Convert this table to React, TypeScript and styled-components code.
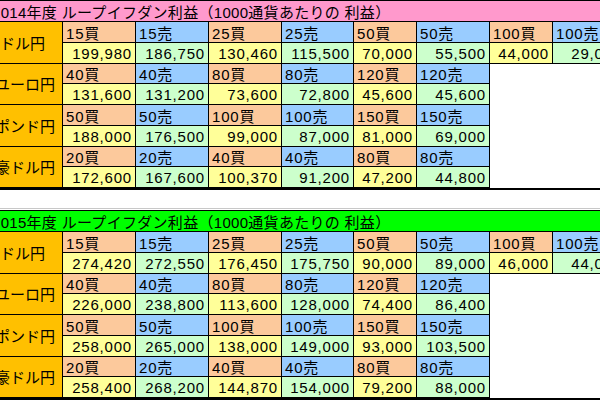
import React from "react";
import styled, { createGlobalStyle } from "styled-components";

const Global = createGlobalStyle`
  html, body { margin: 0; padding: 0; background: #fff; overflow: hidden; }
  body { font-family: "Liberation Sans", "Noto Sans CJK JP", sans-serif; }
`;

const Page = styled.div`
  width: 600px;
  height: 400px;
  overflow: hidden;
`;

const Sheet = styled.div`
  margin-left: -12px;
  width: 638px;
  display: grid;
  grid-template-columns: 75px 73px 73px 73px 72px 63px 73px 63px 73px;
  grid-template-rows: 21px;
  grid-auto-rows: 20.75px;
  border-top: 1px solid #000;
  border-bottom: 2px solid #000;
  font-size: 15px;
  color: #000;
`;

const Title = styled.div<{ $bg: string }>`
  grid-column: 1 / -1;
  background: ${(p) => p.$bg};
  border-bottom: 1px solid #000;
  box-sizing: border-box;
  display: flex;
  align-items: center;
  padding-left: 4px;
  white-space: nowrap;
  letter-spacing: 0.3px;
`;

const Pair = styled.div<{ $nudge: number }>`
  grid-row: span 2;
  background: #ffc000;
  border-right: 1px solid #000;
  border-bottom: 1px solid #000;
  box-sizing: border-box;
  display: flex;
  align-items: center;
  justify-content: center;
  padding-right: ${(p) => p.$nudge}px;
  white-space: nowrap;
  overflow: hidden;
`;

const Cell = styled.div<{ $bg: string; $right?: boolean }>`
  background: ${(p) => p.$bg};
  border-right: 1px solid #000;
  border-bottom: 1px solid #000;
  box-sizing: border-box;
  display: flex;
  align-items: center;
  justify-content: ${(p) => (p.$right ? "flex-end" : "flex-start")};
  padding: ${(p) => (p.$right ? "1px 3px 0 0" : "1px 0 0 3px")};
  white-space: nowrap;
  overflow: hidden;
  letter-spacing: 0.8px;
`;

const Blank = styled.div`
  background: #fff;
`;

const Divider = styled.div`
  height: 19px;
  box-sizing: border-box;
  border-bottom: 1px solid #c8c8c8;
  margin-bottom: 1px;
`;

type Entry = [string, string];
type Group = { name: string; nudge: number; items: Entry[] };

const BUY_LABEL = "#fcc99c";
const SELL_LABEL = "#99ccff";
const BUY_VAL = "#ffff99";
const SELL_VAL = "#ccffcc";

const y2014: Group[] = [
  {
    name: "米ドル円",
    nudge: 20,
    items: [
      ["15買", "199,980"], ["15売", "186,750"], ["25買", "130,460"], ["25売", "115,500"],
      ["50買", "70,000"], ["50売", "55,500"], ["100買", "44,000"], ["100売", "29,000"],
    ],
  },
  {
    name: "ユーロ円",
    nudge: 0,
    items: [
      ["40買", "131,600"], ["40売", "131,200"], ["80買", "73,600"], ["80売", "72,800"],
      ["120買", "45,600"], ["120売", "45,600"],
    ],
  },
  {
    name: "ポンド円",
    nudge: 0,
    items: [
      ["50買", "188,000"], ["50売", "176,500"], ["100買", "99,000"], ["100売", "87,000"],
      ["150買", "81,000"], ["150売", "69,000"],
    ],
  },
  {
    name: "豪ドル円",
    nudge: 0,
    items: [
      ["20買", "172,600"], ["20売", "167,600"], ["40買", "100,370"], ["40売", "91,200"],
      ["80買", "47,200"], ["80売", "44,800"],
    ],
  },
];

const y2015: Group[] = [
  {
    name: "米ドル円",
    nudge: 20,
    items: [
      ["15買", "274,420"], ["15売", "272,550"], ["25買", "176,450"], ["25売", "175,750"],
      ["50買", "90,000"], ["50売", "89,000"], ["100買", "46,000"], ["100売", "44,000"],
    ],
  },
  {
    name: "ユーロ円",
    nudge: 0,
    items: [
      ["40買", "226,000"], ["40売", "238,800"], ["80買", "113,600"], ["80売", "128,000"],
      ["120買", "74,400"], ["120売", "86,400"],
    ],
  },
  {
    name: "ポンド円",
    nudge: 0,
    items: [
      ["50買", "258,000"], ["50売", "265,000"], ["100買", "138,000"], ["100売", "149,000"],
      ["150買", "93,000"], ["150売", "103,500"],
    ],
  },
  {
    name: "豪ドル円",
    nudge: 0,
    items: [
      ["20買", "258,400"], ["20売", "268,200"], ["40買", "144,870"], ["40売", "154,000"],
      ["80買", "79,200"], ["80売", "88,000"],
    ],
  },
];

const COLS = 8;

function YearTable({ title, bg, groups }: { title: string; bg: string; groups: Group[] }) {
  return (
    <Sheet>
      <Title $bg={bg}>{title}</Title>
      {groups.map((g, gi) => {
        const labels: React.ReactNode[] = [];
        const values: React.ReactNode[] = [];
        for (let i = 0; i < COLS; i++) {
          const it = g.items[i];
          if (!it) {
            labels.push(<Blank key={`l${i}`} />);
            values.push(<Blank key={`v${i}`} />);
            continue;
          }
          const buy = it[0].endsWith("買");
          labels.push(
            <Cell key={`l${i}`} $bg={buy ? BUY_LABEL : SELL_LABEL}>
              {it[0]}
            </Cell>
          );
          values.push(
            <Cell key={`v${i}`} $bg={buy ? BUY_VAL : SELL_VAL} $right>
              {it[1]}
            </Cell>
          );
        }
        return (
          <React.Fragment key={gi}>
            <Pair $nudge={g.nudge}>{g.name}</Pair>
            {labels}
            {values}
          </React.Fragment>
        );
      })}
    </Sheet>
  );
}

export default function App() {
  return (
    <Page>
      <Global />
      <YearTable title="2014年度 ループイフダン利益（1000通貨あたりの 利益）" bg="#ff99cc" groups={y2014} />
      <Divider />
      <YearTable title="2015年度 ループイフダン利益（1000通貨あたりの 利益）" bg="#00ff00" groups={y2015} />
    </Page>
  );
}
